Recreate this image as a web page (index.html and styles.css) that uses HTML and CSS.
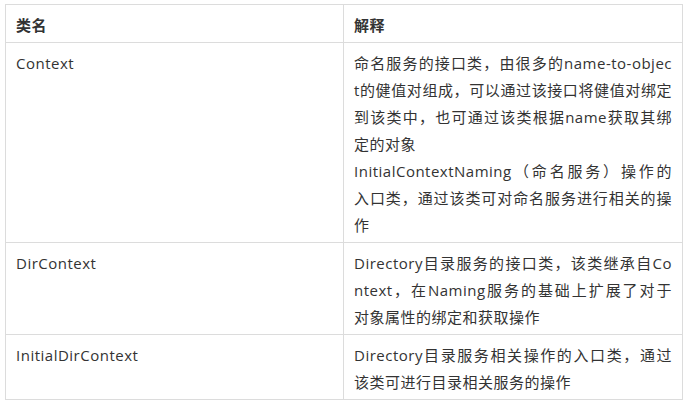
FILE: index.html
```html
<!DOCTYPE html>
<html lang="zh-CN">
<head>
<meta charset="utf-8">
<link rel="stylesheet" href="styles.css">
</head>
<body>
<table class="doc-table">
  <thead>
    <tr>
      <th class="col-name">类名</th>
      <th class="col-desc">解释</th>
    </tr>
  </thead>
  <tbody>
    <tr>
      <td>Context</td>
      <td>
        <span class="ln">命名服务的接口类，由很多的name-to-objec</span>
        <span class="ln">t的健值对组成，可以通过该接口将健值对绑定</span>
        <span class="ln">到该类中，也可通过该类根据name获取其绑</span>
        <span class="ln end">定的对象</span>
        <span class="ln">InitialContextNaming（命名服务）操作的</span>
        <span class="ln">入口类，通过该类可对命名服务进行相关的操</span>
        <span class="ln end">作</span>
      </td>
    </tr>
    <tr>
      <td>DirContext</td>
      <td>
        <span class="ln">Directory目录服务的接口类，该类继承自Co</span>
        <span class="ln">ntext，在Naming服务的基础上扩展了对于</span>
        <span class="ln end">对象属性的绑定和获取操作</span>
      </td>
    </tr>
    <tr>
      <td>InitialDirContext</td>
      <td>
        <span class="ln">Directory目录服务相关操作的入口类，通过</span>
        <span class="ln end">该类可进行目录相关服务的操作</span>
      </td>
    </tr>
  </tbody>
</table>
</body>
</html>
```
FILE: styles.css
```css
html, body {
  margin: 0;
  background: #ffffff;
}
body {
  padding: 4px 5px;
  font-family: "Open Sans", "Noto Sans CJK SC", sans-serif;
  font-size: 15px;
  letter-spacing: 0.5px;
  color: #333333;
}
.doc-table {
  border-collapse: collapse;
  width: 677px;
  table-layout: fixed;
}
.doc-table th,
.doc-table td {
  border: 1px solid #dcdcdc;
  padding: 7px 10px 3px;
  line-height: 27px;
  vertical-align: top;
  text-align: left;
}
.doc-table th {
  font-weight: bold;
}
.col-name {
  width: 317px;
}
.col-desc {
  width: 318px;
}
.ln {
  display: block;
  white-space: nowrap;
  text-align: justify;
  text-align-last: justify;
}
.ln.end {
  text-align-last: left;
}
```
